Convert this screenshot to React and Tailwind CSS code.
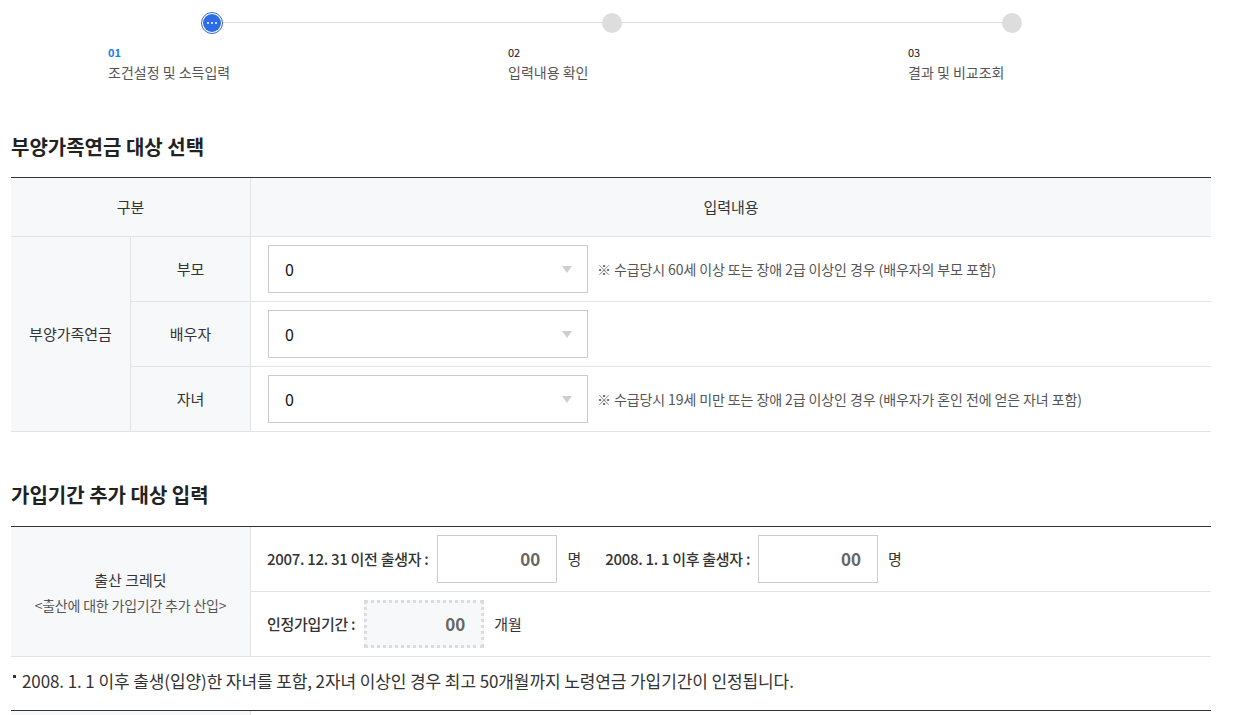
import React from 'react';

const font = { fontFamily: '"Noto Sans CJK KR", "Noto Sans", sans-serif' };

const steps = [
  { no: '01', label: '조건설정 및 소득입력', active: true },
  { no: '02', label: '입력내용 확인' },
  { no: '03', label: '결과 및 비교조회' },
];

const Arrow = () => (
  <svg width="10" height="7" viewBox="0 0 10 7" className="shrink-0">
    <path d="M0 0 L10 0 L5 7 Z" fill="#cfcfcf" />
  </svg>
);

const SelectBox = () => (
  <div className="ml-[17px] flex h-[48px] w-[320px] shrink-0 items-center justify-between border border-[#cccccc] bg-white pl-[16px] pr-[15px]">
    <span className="text-[16px] text-[#111]">0</span>
    <Arrow />
  </div>
);

const NumBox = () => (
  <div className="flex h-[48px] w-[120px] items-center justify-end border border-[#cccccc] bg-white pr-[16px] text-[17px] font-semibold text-[#666]">
    00
  </div>
);

export default function App() {
  const rows = [
    { name: '부모', note: '※ 수급당시 60세 이상 또는 장애 2급 이상인 경우 (배우자의 부모 포함)' },
    { name: '배우자', note: '' },
    { name: '자녀', note: '※ 수급당시 19세 미만 또는 장애 2급 이상인 경우 (배우자가 혼인 전에 얻은 자녀 포함)' },
  ];

  return (
    <div style={font} className="min-h-[715px] w-[1233px] overflow-hidden bg-white text-[#333]">
      {/* steps */}
      <div className="relative pt-[13px] pl-[108px]">
        <div className="absolute left-[222px] top-[22px] h-px w-[780px] bg-[#dddddd]" />
        <div className="grid grid-cols-[400px_400px_400px]">
          {steps.map((s) => (
            <div key={s.no} className="flex flex-col">
              <div className="relative ml-[94px] h-[20px] w-[20px]">
                {s.active ? (
                  <div className="-m-[1px] flex h-[22px] w-[22px] items-center justify-center rounded-full border border-[#3467e0] bg-white">
                    <div className="flex h-[18px] w-[18px] items-center justify-center gap-[2px] rounded-full bg-[#2c6ce8]">
                      <span className="h-[2px] w-[2px] rounded-full bg-white" />
                      <span className="h-[2px] w-[2px] rounded-full bg-white" />
                      <span className="h-[2px] w-[2px] rounded-full bg-white" />
                    </div>
                  </div>
                ) : (
                  <div className="h-[20px] w-[20px] rounded-full bg-[#dddddd]" />
                )}
              </div>
              <div className={`mt-[11px] text-[11px] leading-[16px] ${s.active ? 'font-bold text-[#1a7cf0]' : 'text-[#111]'}`}>{s.no}</div>
              <div className="mt-[2px] text-[14px] leading-[20px] text-[#555]">{s.label}</div>
            </div>
          ))}
        </div>
      </div>

      <div className="ml-[11px] w-[1200px]">
        {/* section 1 */}
        <h2 className="mt-[51px] text-[20px] font-bold leading-[28px] text-[#222]">부양가족연금 대상 선택</h2>
        <div className="mt-[16px] grid grid-cols-[120px_120px_1fr] border-t border-[#333] text-[15px]">
          <div className="col-span-2 flex h-[59px] items-center justify-center border-b border-r border-[#e3e3e3] bg-[#f7f8fa]">구분</div>
          <div className="flex h-[59px] items-center justify-center border-b border-[#e3e3e3] bg-[#f7f8fa]">입력내용</div>

          <div className="row-span-3 flex items-center justify-center border-b border-r border-[#e3e3e3] bg-[#f7f8fa]">부양가족연금</div>
          {rows.map((r) => (
            <React.Fragment key={r.name}>
              <div className="flex h-[65px] items-center justify-center border-b border-r border-[#e3e3e3] bg-[#f7f8fa]">{r.name}</div>
              <div className="flex h-[65px] items-center border-b border-[#e3e3e3]">
                <SelectBox />
                {r.note && <span className="ml-[9px] text-[14px] tracking-[-0.1px] text-[#555]">{r.note}</span>}
              </div>
            </React.Fragment>
          ))}
        </div>

        {/* section 2 */}
        <h2 className="mt-[49px] text-[20px] font-bold leading-[28px] text-[#222]">가입기간 추가 대상 입력</h2>
        <div className="mt-[17px] grid grid-cols-[240px_1fr] border-t border-[#333] text-[15px]">
          <div className="row-span-2 flex flex-col items-center justify-center border-b border-r border-[#e3e3e3] bg-[#f7f8fa]">
            <div className="text-[15px] leading-[22px] text-[#333]">출산 크레딧</div>
            <div className="mt-[4px] text-[14px] leading-[20px] tracking-[-0.2px] text-[#555]">&lt;출산에 대한 가입기간 추가 산입&gt;</div>
          </div>
          <div className="flex h-[65px] items-center border-b border-[#e3e3e3] pl-[16px]">
            <span className="font-medium tracking-[-0.3px]">2007. 12. 31 이전 출생자 :</span>
            <div className="ml-[9px]"><NumBox /></div>
            <span className="ml-[10px]">명</span>
            <span className="ml-[24px] font-medium tracking-[-0.3px]">2008. 1. 1 이후 출생자 :</span>
            <div className="ml-[8px]"><NumBox /></div>
            <span className="ml-[10px]">명</span>
          </div>
          <div className="flex h-[65px] items-center border-b border-[#e3e3e3] pl-[16px]">
            <span className="font-medium tracking-[-0.3px]">인정가입기간 :</span>
            <div className="ml-[9px] flex h-[48px] w-[120px] items-center justify-end border-[3px] border-dotted border-[#dcdcdc] bg-[#f7f8fa] pr-[16px] text-[17px] font-semibold text-[#666]">
              00
            </div>
            <span className="ml-[10px]">개월</span>
          </div>
        </div>
        <div className="flex h-[53px] items-center pb-[6px]">
          <span className="mb-[8px] ml-[2px] h-[3px] w-[3px] bg-[#333]" />
          <span className="ml-[6px] text-[17px] tracking-[-0.1px] text-[#333]">2008. 1. 1 이후 출생(입양)한 자녀를 포함, 2자녀 이상인 경우 최고 50개월까지 노령연금 가입기간이 인정됩니다.</span>
        </div>
        <div className="grid h-[20px] grid-cols-[240px_1fr] border-t border-[#333]">
          <div className="border-r border-[#e3e3e3] bg-[#f7f8fa]" />
          <div />
        </div>
      </div>
    </div>
  );
}
